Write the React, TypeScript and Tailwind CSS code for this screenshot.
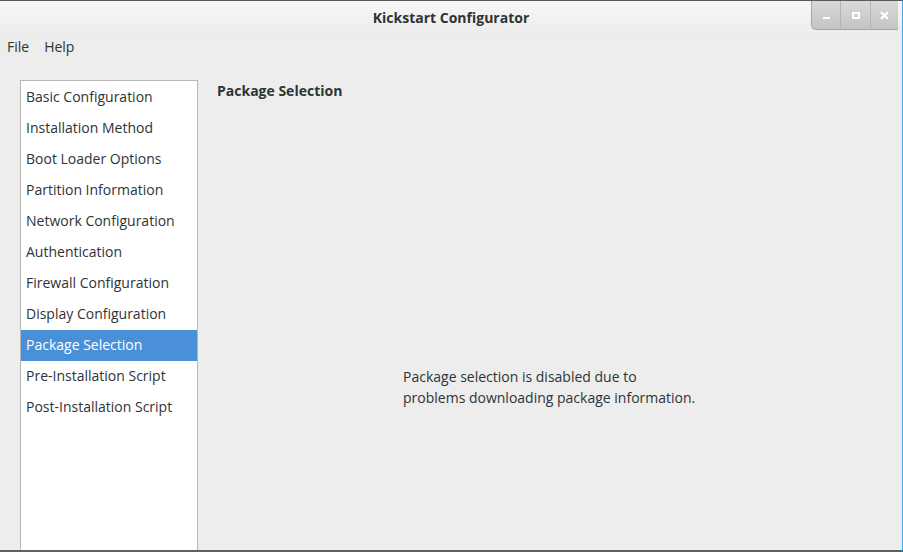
import React from 'react';

const items = [
  'Basic Configuration',
  'Installation Method',
  'Boot Loader Options',
  'Partition Information',
  'Network Configuration',
  'Authentication',
  'Firewall Configuration',
  'Display Configuration',
  'Package Selection',
  'Pre-Installation Script',
  'Post-Installation Script',
];

const font = { fontFamily: '"Open Sans", "DejaVu Sans", sans-serif' };

export default function App() {
  const selected = 'Package Selection';
  return (
    <div
      className="w-[903px] h-[552px] flex flex-col bg-[#ededed] text-[#2e3436] border-t border-t-[#5a5a5a] border-b-2 border-b-[#5f5f5f] border-r border-r-[#3daee9] overflow-hidden"
      style={font}
    >
      {/* title bar */}
      <div className="relative h-[35px] shrink-0 flex items-center justify-center bg-gradient-to-b from-[#f7f7f7] to-[#ececec]">
        <span className="text-[14px] font-bold text-[#2e3436] -mt-[3px]">Kickstart Configurator</span>
        <div className="absolute right-[4px] top-0 flex h-[29px] rounded-bl-[5px] border-l border-b border-[#a6a6a6] bg-gradient-to-b from-[#d9d9d9] to-[#c4c4c4] overflow-hidden">
          <div className="w-[29px] flex items-center justify-center border-r border-[#b4b4b4]">
            <div className="w-[7px] h-[2px] bg-white mt-[6px]" />
          </div>
          <div className="w-[30px] flex items-center justify-center border-r border-[#b4b4b4]">
            <div className="w-[8px] h-[7px] border-2 border-white" />
          </div>
          <div className="w-[27px] flex items-center justify-center">
            <svg width="9" height="9" viewBox="0 0 9 9">
              <path d="M1 1 L8 8 M8 1 L1 8" stroke="white" strokeWidth="2.2" />
            </svg>
          </div>
        </div>
      </div>

      {/* menu bar */}
      <div className="h-[24px] shrink-0 flex items-center gap-[15px] px-[7px] pb-[4px] text-[14px]">
        <span>File</span>
        <span>Help</span>
      </div>

      <div className="flex flex-1 min-h-0 pt-[20px] pl-[20px]">
        {/* sidebar */}
        <div className="w-[178px] bg-white border border-[#b6b6b6] border-b-0 py-[1px] flex flex-col">
          {items.map((it) => (
            <div
              key={it}
              className={
                'h-[31px] flex items-center px-[5px] pb-[2px] text-[14px] ' +
                (it === selected ? 'bg-[#4a90d9] text-white' : 'text-[#2e3436]')
              }
            >
              {it}
            </div>
          ))}
        </div>

        {/* content */}
        <div className="flex-1 flex flex-col pl-[19px]">
          <div className="text-[14px] font-bold h-[20px] flex items-center">Package Selection</div>
          <p className="text-[14px] leading-[21px] mt-[266px] ml-[186px]">
            Package selection is disabled due to
            <br />
            problems downloading package information.
          </p>
        </div>
      </div>
    </div>
  );
}
